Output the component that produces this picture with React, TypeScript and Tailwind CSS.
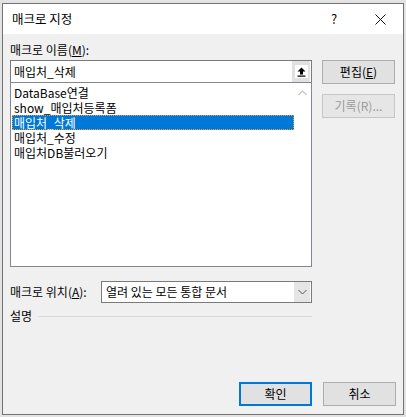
import React from 'react';

const font = { fontFamily: '"Noto Sans CJK KR", "Noto Sans", sans-serif' };

const macros = ['DataBase연결', 'show_매입처등록폼', '매입처_삭제', '매입처_수정', '매입처DB불러오기'];

function Btn({ children, primary, disabled }: { children: React.ReactNode; primary?: boolean; disabled?: boolean }) {
  return (
    <div
      className={
        'w-[73px] h-[24px] flex items-center justify-center text-[12px] ' +
        (primary
          ? 'border-2 border-[#0078d7] bg-[#e1e1e1] text-black'
          : disabled
            ? 'border border-[#c6c6c6] bg-[#e6e6e6] text-[#9b9b9b]'
            : 'border border-[#adadad] bg-[#e1e1e1] text-black')
      }
    >
      {children}
    </div>
  );
}

export default function App() {
  return (
    <div className="w-[406px] h-[417px] bg-[#e3e3e3] pt-[3px] pl-[2px] overflow-hidden" style={font}>
      <div className="w-[402px] h-[412px] border border-[#737373] bg-[#f0f0f0] flex flex-col">
        {/* title bar */}
        <div className="h-[30px] bg-white flex items-center pl-[9px] text-[12.5px] text-black shrink-0">
          <span className="flex-1">매크로 지정</span>
          <span className="w-[20px] text-center text-[13px] mr-[31px]">?</span>
          <svg width="11" height="11" viewBox="0 0 11 11" className="mr-[17px]">
            <path d="M0.5 0.5 L10.5 10.5 M10.5 0.5 L0.5 10.5" stroke="#111" strokeWidth="1" />
          </svg>
        </div>

        <div className="flex-1 flex flex-col pl-[7px] pr-[7px] pb-[8px] text-[12px] text-black">
          <div className="flex gap-[10px]">
            {/* left column */}
            <div className="w-[302px] flex flex-col">
              <div className="mt-[8px] h-[16px] leading-[16px] mb-[2px]">
                매크로 이름(<span className="underline">M</span>):
              </div>
              <div className="h-[23px] border border-[#7a7a7a] bg-white flex items-center">
                <span className="flex-1 pl-[3px] leading-[16px]">매입처_삭제</span>
                <div className="w-[18px] h-[21px] bg-[#e1e1e1] flex items-center justify-center mr-px">
                  <div className="w-[13px] h-[13px] bg-white flex items-center justify-center">
                    <svg width="9" height="10" viewBox="0 0 9 10">
                      <path d="M4.5 0.5 L8.5 4.5 L6 4.5 L6 7.5 L3 7.5 L3 4.5 L0.5 4.5 Z" fill="#000" />
                      <rect x="0.5" y="8.5" width="8" height="1.2" fill="#000" />
                    </svg>
                  </div>
                </div>
              </div>
              <div className="h-[185px] -mt-px border border-[#828790] bg-white flex">
                <div className="flex-1 pt-[2px] pl-px">
                  {macros.map((m, i) => (
                    <div
                      key={m}
                      className={
                        'h-[15px] leading-[15px] pl-[2px] whitespace-nowrap overflow-hidden ' +
                        (i === 2 ? 'bg-[#0078d7] text-white outline-1 outline-dotted -outline-offset-1 outline-[#e8a13a]' : '')
                      }
                    >
                      {m}
                    </div>
                  ))}
                </div>
                <div className="w-[17px] flex justify-center pt-[7px]">
                  <svg width="9" height="6" viewBox="0 0 9 6">
                    <path d="M0.5 5 L4.5 1 L8.5 5" stroke="#c4c4c4" strokeWidth="1.2" fill="none" />
                  </svg>
                </div>
              </div>
            </div>

            {/* right column */}
            <div className="flex flex-col pt-[26px] gap-[10px]">
              <Btn>
                <span>
                  편집(<span className="underline">E</span>)
                </span>
              </Btn>
              <Btn disabled>기록(R)...</Btn>
            </div>
          </div>

          {/* macro location */}
          <div className="mt-[14px] flex items-center w-[302px]">
            <span className="w-[91px]">
              매크로 위치(<span className="underline">A</span>):
            </span>
            <div className="flex-1 h-[22px] border border-[#7a7a7a] bg-white flex items-center">
              <span className="flex-1 pl-[4px]">열려 있는 모든 통합 문서</span>
              <div className="w-[16px] h-[20px] bg-[#e5e5e5] flex items-center justify-center mr-px">
                <svg width="9" height="6" viewBox="0 0 9 6">
                  <path d="M0.5 1 L4.5 5 L8.5 1" stroke="#555" strokeWidth="1" fill="none" />
                </svg>
              </div>
            </div>
          </div>

          {/* description */}
          <div className="mt-[5px] flex items-center w-[302px] h-[16px]">
            <span className="mr-[6px]">설명</span>
            <div className="flex-1 h-px bg-[#d9d9d9]" />
          </div>

          <div className="mt-auto flex justify-end gap-[11px]">
            <Btn primary>확인</Btn>
            <Btn>취소</Btn>
          </div>
        </div>
      </div>
    </div>
  );
}
